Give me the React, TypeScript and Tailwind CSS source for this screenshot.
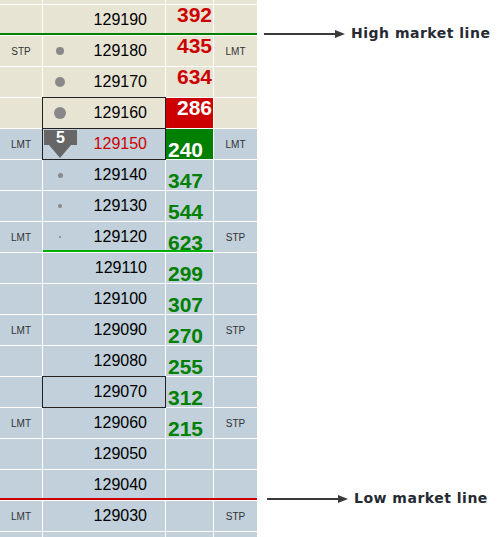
import React from "react";

type Row = {
  price: number;
  top?: boolean;
  left?: string;
  right?: string;
  dot?: number;
  badge?: string;
  boxed?: boolean;
  priceRed?: boolean;
  vol?: number;
  volKind?: "ask" | "askHi" | "bid" | "bidHi";
  line?: "high" | "mid" | "low";
};

const rows: Row[] = [
  { price: 129190, top: true, vol: 392, volKind: "ask", line: "high" },
  { price: 129180, top: true, left: "STP", right: "LMT", dot: 8, vol: 435, volKind: "ask" },
  { price: 129170, top: true, dot: 10, vol: 634, volKind: "ask" },
  { price: 129160, top: true, dot: 12, boxed: true, vol: 286, volKind: "askHi" },
  { price: 129150, left: "LMT", right: "LMT", badge: "5", boxed: true, priceRed: true, vol: 240, volKind: "bidHi" },
  { price: 129140, dot: 5, vol: 347, volKind: "bid" },
  { price: 129130, dot: 4, vol: 544, volKind: "bid" },
  { price: 129120, left: "LMT", right: "STP", dot: 2, vol: 623, volKind: "bid", line: "mid" },
  { price: 129110, vol: 299, volKind: "bid" },
  { price: 129100, vol: 307, volKind: "bid" },
  { price: 129090, left: "LMT", right: "STP", vol: 270, volKind: "bid" },
  { price: 129080, vol: 255, volKind: "bid" },
  { price: 129070, boxed: true, vol: 312, volKind: "bid" },
  { price: 129060, left: "LMT", right: "STP", vol: 215, volKind: "bid" },
  { price: 129050 },
  { price: 129040, line: "low" },
  { price: 129030, left: "LMT", right: "STP" },
];

function Arrow() {
  return (
    <svg width="81" height="10" viewBox="0 0 81 10" className="shrink-0">
      <line x1="0" y1="5" x2="72" y2="5" stroke="#3a3a3a" strokeWidth="2" />
      <polygon points="71,1 81,5 71,9" fill="#3a3a3a" />
    </svg>
  );
}

function Note({ label, gap }: { label: string; gap: string }) {
  return (
    <div className="flex h-[3px] items-center self-end overflow-visible">
      <div className={`flex items-center ${gap}`}>
        <Arrow />
        <span className="ml-[6px] whitespace-nowrap font-['DejaVu_Sans',sans-serif] text-[14px] font-bold tracking-[0.5px] text-[#262a33]">
          {label}
        </span>
      </div>
    </div>
  );
}

function VolCell({ r, bg }: { r: Row; bg: string }) {
  if (!r.vol) return <div className={bg} />;
  if (r.volKind === "ask")
    return (
      <div className={`${bg} pr-px text-right text-[21px] font-bold leading-[20px] text-[#cc0000]`}>{r.vol}</div>
    );
  if (r.volKind === "askHi")
    return (
      <div className="bg-[#cc0000] pr-px text-right text-[21px] font-bold leading-[20px] text-white">{r.vol}</div>
    );
  if (r.volKind === "bidHi")
    return (
      <div className="bg-[#008000] pl-[2px] pt-[11px] text-[21px] font-bold leading-[20px] text-white">{r.vol}</div>
    );
  return (
    <div className={`${bg} pl-[2px] pt-[11px] text-[21px] font-bold leading-[20px] text-[#008000]`}>{r.vol}</div>
  );
}

function PriceRow({ r }: { r: Row }) {
  const bg = r.top ? "bg-[#e8e4d4]" : "bg-[#c1d0db]";
  return (
    <div className="flex h-[30px] shrink-0">
      <div className="relative grid h-[30px] w-[257px] shrink-0 grid-cols-[42px_122px_47px_43px] grid-rows-[30px] gap-x-px">
        <div className={`${bg} flex items-center justify-center text-[10px] text-[#333]`}>{r.left}</div>
        <div className={`${bg} flex items-center ${r.boxed ? "outline outline-1 outline-[#222]" : ""}`}>
          {r.badge ? (
            <div className="flex w-[34px] flex-col self-stretch pt-px pl-px">
              <div className="flex h-[15px] w-[33px] items-center justify-center bg-[#666] text-[16px] font-bold leading-[15px] text-white">
                {r.badge}
              </div>
              <div className="ml-[5px] h-0 w-0 border-x-[11px] border-t-[13px] border-x-transparent border-t-[#666]" />
            </div>
          ) : (
            <div className="flex w-[34px] justify-center">
              {r.dot ? (
                <div className="rounded-full bg-[#888]" style={{ width: r.dot, height: r.dot }} />
              ) : null}
            </div>
          )}
          <div className={`flex-1 pr-[18px] text-right text-[16px] ${r.priceRed ? "text-[#cc0000]" : "text-black"}`}>
            {r.price}
          </div>
        </div>
        <VolCell r={r} bg={bg} />
        <div className={`${bg} flex items-center justify-center text-[10px] text-[#333]`}>{r.right}</div>
        {r.line === "high" && <div className="absolute bottom-0 left-0 h-[2px] w-[257px] bg-[#008000]" />}
        {r.line === "mid" && <div className="absolute bottom-0 left-[43px] h-[2px] w-[170px] bg-[#00b000]" />}
        {r.line === "low" && <div className="absolute bottom-0 left-0 h-[2px] w-[257px] bg-[#cc0000]" />}
      </div>
      {r.line === "high" && <Note label="High market line" gap="ml-[7px]" />}
      {r.line === "low" && <Note label="Low market line" gap="ml-[10px]" />}
    </div>
  );
}

function Stub({ top }: { top?: boolean }) {
  const bg = top ? "bg-[#e8e4d4]" : "bg-[#c1d0db]";
  return (
    <div className={`grid w-[257px] shrink-0 grid-cols-[42px_122px_47px_43px] gap-x-px ${top ? "h-[4px]" : "h-[6px]"}`}>
      <div className={bg} />
      <div className={bg} />
      <div className={bg} />
      <div className={bg} />
    </div>
  );
}

export default function App() {
  return (
    <div className="flex h-[537px] w-[502px] flex-col gap-y-px overflow-hidden bg-white font-['Liberation_Sans',Arial,sans-serif]">
      <Stub top />
      {rows.map((r) => (
        <PriceRow key={r.price} r={r} />
      ))}
      <Stub />
    </div>
  );
}
